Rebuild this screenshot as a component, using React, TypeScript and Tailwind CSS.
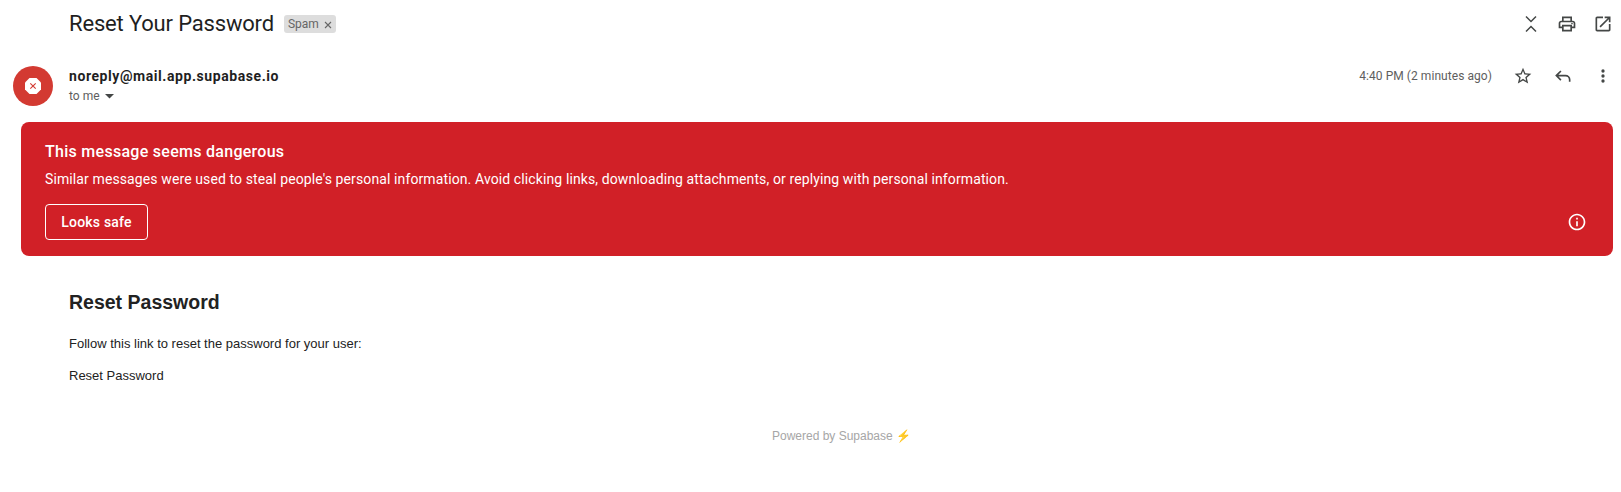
export default function App() {
  return (
    <div className="w-[1621px] h-[492px] bg-white overflow-hidden font-['Roboto',sans-serif] text-[#202124]">
      {/* subject */}
      <div className="flex items-center h-[48px] pl-[69px] pr-[8px]">
        <h1 className="text-[22px] leading-[28px] font-normal tracking-[-0.17px] text-[#1f1f1f]">Reset Your Password</h1>
        <span className="ml-[10px] flex items-center h-[18px] px-[4px] rounded-[3px] bg-[#dddddd] text-[12px] text-[#666666]">
          Spam
          <svg width="8" height="8" viewBox="0 0 8 8" className="ml-[5px] mt-[1px]">
            <path d="M1 1l6 6M7 1l-6 6" stroke="#666666" strokeWidth="1.1" />
          </svg>
        </span>
        <div className="ml-auto flex items-center gap-[16px]">
          <svg width="20" height="20" viewBox="0 0 20 20" fill="none" stroke="#444746" strokeWidth="1.5">
            <path d="M5 2.500l5 5 5-5M5 17.500l5-5 5 5" />
          </svg>
          <svg width="20" height="20" viewBox="0 0 24 24" fill="#444746">
            <path d="M19 8h-1V3H6v5H5c-1.66 0-3 1.34-3 3v6h4v4h12v-4h4v-6c0-1.66-1.34-3-3-3zM8 5h8v3H8V5zm8 12v2H8v-4h8v2zm2-2v-2H6v2H4v-4c0-.55.45-1 1-1h14c.55 0 1 .45 1 1v4h-2z" />
            <circle cx="18" cy="11.5" r="1" />
          </svg>
          <svg width="20" height="20" viewBox="0 0 24 24" fill="#444746">
            <path d="M19 19H5V5h7V3H5c-1.11 0-2 .9-2 2v14c0 1.1.89 2 2 2h14c1.1 0 2-.9 2-2v-7h-2v7zM14 3v2h3.59l-9.83 9.83 1.41 1.41L19 6.41V10h2V3h-7z" />
          </svg>
        </div>
      </div>

      {/* sender */}
      <div className="flex h-[74px] pt-[18px] pl-[13px] pr-[8px]">
        <div className="w-[40px] h-[40px] rounded-full bg-[#d33a32] flex items-center justify-center">
          <svg width="18" height="18" viewBox="0 0 18 18">
            <path d="M5.5 1h7L17 5.5v7L12.500 17h-7L1 12.500v-7z" fill="#ffffff" />
            <path d="M6.300 6.300l5.400 5.400M11.700 6.300l-5.400 5.400" stroke="#d33a32" strokeWidth="1.100" />
          </svg>
        </div>
        <div className="ml-[16px]">
          <div className="text-[14px] leading-[20px] font-bold tracking-[0.57px] text-[#1f1f1f]">noreply@mail.app.supabase.io</div>
          <div className="flex items-center text-[12px] leading-[20px] text-[#5e5e5e]">
            to me
            <svg width="9" height="5" viewBox="0 0 9 5" className="ml-[5px]">
              <path d="M0 0h9L4.500 4.500z" fill="#444746" />
            </svg>
          </div>
        </div>
        <div className="ml-auto flex items-start">
          <span className="text-[12px] leading-[20px] tracking-[0.06px] text-[#5e5e5e] mr-[21px]">4:40 PM (2 minutes ago)</span>
          <div className="flex gap-[20px]">
            <svg width="20" height="20" viewBox="0 0 24 24" fill="#444746">
              <path d="M22 9.240l-7.190-.62L12 2 9.190 8.630 2 9.240l5.460 4.730L5.820 21 12 17.270 18.180 21l-1.630-7.030L22 9.240zM12 15.400l-3.760 2.270 1-4.280-3.320-2.880 4.380-.38L12 6.100l1.710 4.040 4.380.38-3.320 2.880 1 4.280L12 15.400z" />
            </svg>
            <svg width="20" height="20" viewBox="0 0 24 24" fill="none" stroke="#444746" strokeWidth="2">
              <path d="M9.500 6L4 11.500 9.500 17M4 11.500h11c2.800 0 5 2.200 5 5V19" />
            </svg>
            <svg width="20" height="20" viewBox="0 0 24 24" fill="#444746">
              <circle cx="12" cy="6" r="2" />
              <circle cx="12" cy="12" r="2" />
              <circle cx="12" cy="18" r="2" />
            </svg>
          </div>
        </div>
      </div>

      {/* warning banner */}
      <div className="mr-[8px] ml-[21px] h-[134px] rounded-[8px] bg-[#d12027] text-white pl-[24px] pr-[26px] pt-[19px]">
        <div className="text-[16px] leading-[22px] font-medium tracking-[0.28px]">This message seems dangerous</div>
        <div className="text-[14px] leading-[20px] tracking-[0.11px] mt-[6px]">
          Similar messages were used to steal people's personal information. Avoid clicking links, downloading attachments, or replying with personal information.
        </div>
        <div className="flex items-center justify-between mt-[15px]">
          <button className="h-[36px] w-[103px] rounded-[4px] border border-white text-[14px] font-medium tracking-[0.2px] text-white">Looks safe</button>
          <svg width="20" height="20" viewBox="0 0 24 24" fill="#ffffff">
            <path d="M11 7h2v2h-2zm0 4h2v6h-2zm1-9C6.480 2 2 6.480 2 12s4.480 10 10 10 10-4.480 10-10S17.520 2 12 2zm0 18c-4.410 0-8-3.590-8-8s3.590-8 8-8 8 3.590 8 8-3.590 8-8 8z" />
          </svg>
        </div>
      </div>

      {/* mail body */}
      <div className="pl-[69px] font-['Liberation_Sans',Arial,sans-serif] text-[#222222]">
        <h2 className="mt-[35px] text-[19.5px] leading-[23px] font-bold">Reset Password</h2>
        <p className="mt-[22px] text-[13px] leading-[15px]">Follow this link to reset the password for your user:</p>
        <p className="mt-[17px] text-[13px] leading-[15px]">Reset Password</p>
      </div>
      <div className="mt-[46px] pl-[62px] text-center text-[12px] leading-[14px] text-[#a6a6a6] font-['Liberation_Sans',Arial,sans-serif]">
        Powered by Supabase <span className="text-[#fbb03b]">⚡</span>
      </div>
    </div>
  )
}
